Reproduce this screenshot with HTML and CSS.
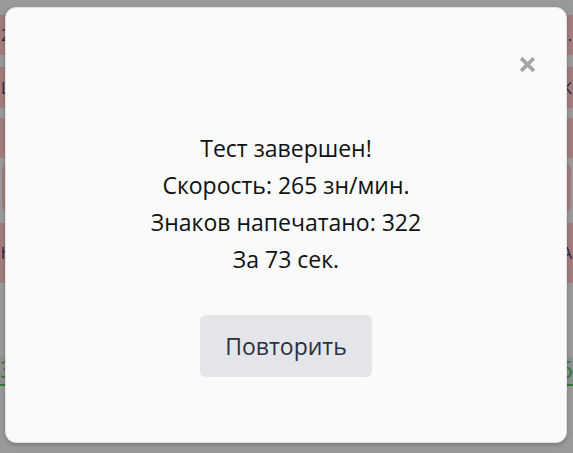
FILE: index.html
```html
<!DOCTYPE html>
<html lang="ru">
<head>
<meta charset="utf-8">
<title>Тест завершен</title>
<link rel="stylesheet" href="styles.css">
</head>
<body>
<div class="page">
  <div class="row r1"><span>2</span><span>.</span></div>
  <div class="row r2"><span>Ц</span><span>К</span></div>
  <div class="row r3"><span></span><span></span></div>
  <div class="row r4 rounded"><span></span><span></span></div>
  <div class="row r5"><span>h</span><span>A</span></div>
  <div class="stats"><span>3</span><span>6</span></div>
</div>
<div class="modal" role="dialog">
  <div class="modal-head">
    <button class="close" aria-label="Закрыть">
      <svg width="17" height="17" viewBox="0 0 16 16"><path d="M2 2 L14 14 M14 2 L2 14" stroke="#a6a6a6" stroke-width="3.4" stroke-linecap="butt"/></svg>
    </button>
  </div>
  <div class="result">
    <p>Тест завершен!</p>
    <p>Скорость: 265 зн/мин.</p>
    <p>Знаков напечатано: 322</p>
    <p>За 73 сек.</p>
  </div>
  <button class="retry">Повторить</button>
</div>
</body>
</html>
```
FILE: styles.css
```css
html, body {
  margin: 0;
  padding: 0;
}
body {
  width: 573px;
  height: 453px;
  overflow: hidden;
  background: #999999;
  font-family: "Open Sans", "Noto Sans", sans-serif;
  position: relative;
}
.page {
  display: flex;
  flex-direction: column;
  padding-top: 15px;
}
.row {
  display: flex;
  justify-content: space-between;
  align-items: center;
  background: #a27c7c;
  color: #1f1f3a;
  font-size: 16px;
  padding: 0 1px;
}
.r1 { height: 40px; margin-bottom: 12px; }
.r2 { height: 41px; margin-bottom: 10px; }
.r3 { height: 40px; margin-bottom: 4px; }
.r4 { height: 51px; margin: 0 2px 10px; border-radius: 8px; }
.r5 { height: 60px; }
.stats {
  display: flex;
  justify-content: space-between;
  margin-top: 74px;
  padding: 0 0 3px;
  border-bottom: 2px solid #2f7a2f;
  color: #2f7a3a;
  font-size: 24px;
  line-height: 24px;
  background: #8f8f8f;
}
.modal {
  position: absolute;
  left: 5px;
  top: 7px;
  width: 560px;
  height: 434px;
  background: #fafafa;
  border: 1px solid #e2e2e2;
  border-radius: 11px;
  box-shadow: 0 2px 4px rgba(0,0,0,0.2);
  display: flex;
  flex-direction: column;
  align-items: center;
}
.modal-head {
  align-self: stretch;
  display: flex;
  justify-content: flex-end;
  padding: 47px 30px 0 0;
}
.close {
  border: 0;
  background: none;
  padding: 0;
  width: 18px;
  height: 18px;
  display: flex;
  align-items: center;
  justify-content: center;
  cursor: pointer;
}
.result {
  margin-top: 57px;
  text-align: center;
  color: #111;
  font-size: 23px;
  line-height: 37px;
}
.result p {
  margin: 0;
}
.retry {
  margin-top: 37px;
  width: 172px;
  height: 62px;
  border: 0;
  border-radius: 6px;
  background: #e4e5e9;
  color: #2b3140;
  font-family: "Open Sans", "Noto Sans", sans-serif;
  font-size: 23px;
  cursor: pointer;
}
```
